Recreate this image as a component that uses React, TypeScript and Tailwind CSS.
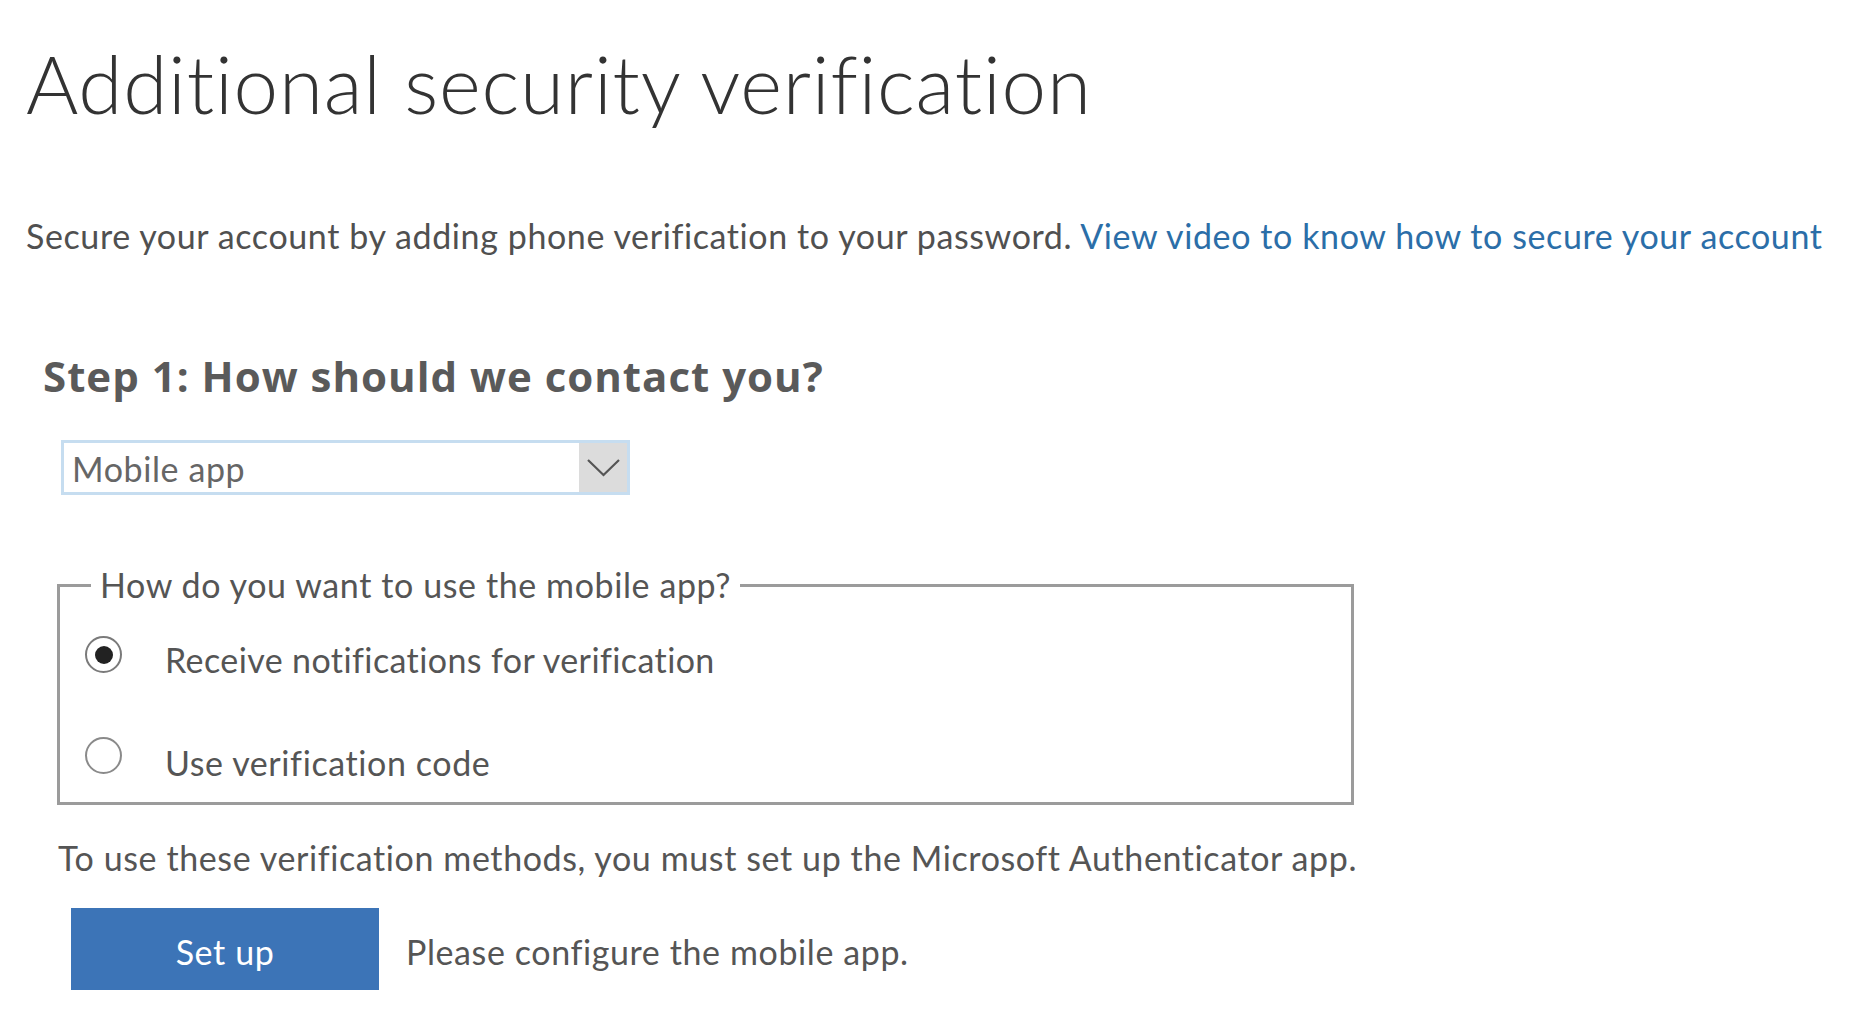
export default function App() {
  return (
    <div className="min-h-screen bg-white pl-[26px] pt-[43px] font-['Lato','Open_Sans',sans-serif] tracking-[0.6px] text-[#505050]">
      {/* Title */}
      <h1 className="text-[80px] font-light leading-none tracking-[0.8px] text-[#333333]">
        Additional security verification
      </h1>

      {/* Intro */}
      <p className="mt-[96px] text-[34px] leading-none whitespace-nowrap">
        Secure your account by adding phone verification to your password.{" "}
        <a href="#" className="text-[#2b6ea8]">
          View video to know how to secure your account
        </a>
      </p>

      {/* Step 1 */}
      <h2 className="mt-[102px] ml-[17px] font-['Open_Sans','Lato',sans-serif] text-[42px] font-bold leading-none tracking-[1px] text-[#5a5a5a]">
        Step 1: How should we contact you?
      </h2>

      <div className="mt-[43px] ml-[35px] flex h-[55px] w-[569px] border-[3px] border-[#c6ddf0] bg-white">
        <div className="flex flex-1 items-center pl-[8px] pt-[2px] text-[34px] leading-none text-[#666666]">
          Mobile app
        </div>
        <div className="flex w-[48px] items-center justify-center bg-[#dcdcdc]">
          <svg width="33" height="18" viewBox="0 0 33 18" fill="none">
            <path d="M1 1 L16.5 16 L32 1" stroke="#555555" strokeWidth="2.2" />
          </svg>
        </div>
      </div>

      {/* Mobile app options */}
      <fieldset className="mt-[73px] ml-[31px] w-[1297px] border-[3px] border-[#9b9b9b] p-0 pb-[22px]">
        <legend className="ml-[31px] px-[9px] text-[34px] leading-none text-[#555555]">
          How do you want to use the mobile app?
        </legend>

        <div className="mt-[41px] flex items-start pl-[25px]">
          <div className="mt-[-7px] flex h-[37px] w-[37px] items-center justify-center rounded-full border-2 border-[#7a7a7a] bg-white">
            <div className="h-[18px] w-[18px] rounded-full bg-[#222222]" />
          </div>
          <span className="ml-[43px] text-[34px] leading-none tracking-[0.4px] text-[#555555]">
            Receive notifications for verification
          </span>
        </div>

        <div className="mt-[69px] flex items-start pl-[25px]">
          <div className="mt-[-9px] h-[37px] w-[37px] rounded-full border-2 border-[#8a8a8a] bg-white" />
          <span className="ml-[43px] text-[34px] leading-none text-[#555555]">
            Use verification code
          </span>
        </div>
      </fieldset>

      <p className="mt-[36px] ml-[32px] text-[34px] leading-none text-[#555555]">
        To use these verification methods, you must set up the Microsoft Authenticator app.
      </p>

      <div className="mt-[33px] ml-[45px] flex items-center">
        <button className="flex h-[82px] w-[308px] items-center justify-center bg-[#3c74b7] pt-[6px] text-[34px] leading-none text-white">
          Set up
        </button>
        <span className="ml-[27px] pt-[6px] text-[34px] leading-none text-[#555555]">
          Please configure the mobile app.
        </span>
      </div>
    </div>
  );
}
